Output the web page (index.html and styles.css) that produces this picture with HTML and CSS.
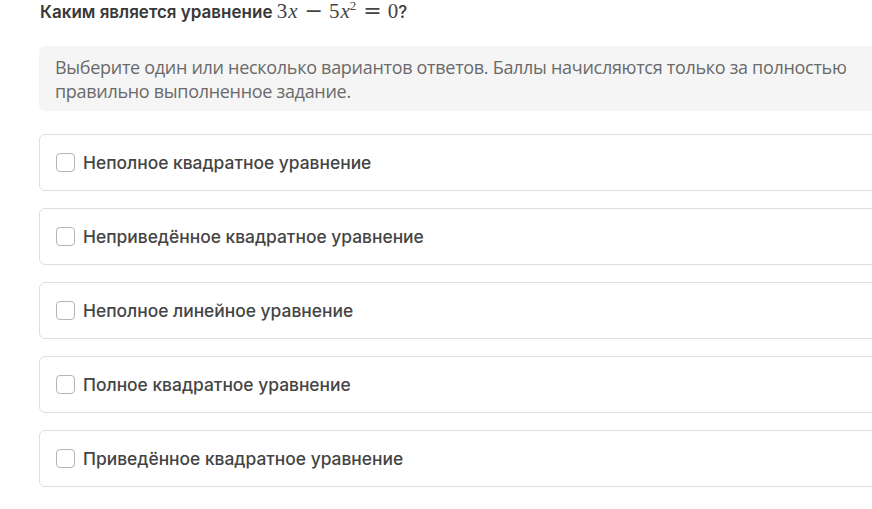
FILE: index.html
```html
<!DOCTYPE html>
<html lang="ru">
<head>
    <meta charset="UTF-8">
    <meta name="viewport" content="width=device-width, initial-scale=1.0">
    <title>Вопрос</title>
    <link rel="stylesheet" href="styles.css">
</head>
<body>

<div class="question">
    <p class="question-title">
        Каким является уравнение
        <span class="math">3<i>x</i><span class="op">−</span>5<i>x</i><sup>2</sup><span class="op">=</span>0</span><span class="qmark">?</span>
    </p>

    <div class="hint">
        Выберите один или несколько вариантов ответов. Баллы начисляются только за полностью
        правильно выполненное задание.
    </div>

    <div class="answers">
        <label class="answer">
            <span class="checkbox"></span>
            <span class="answer-text">Неполное квадратное уравнение</span>
        </label>
        <label class="answer">
            <span class="checkbox"></span>
            <span class="answer-text">Неприведённое квадратное уравнение</span>
        </label>
        <label class="answer">
            <span class="checkbox"></span>
            <span class="answer-text">Неполное линейное уравнение</span>
        </label>
        <label class="answer">
            <span class="checkbox"></span>
            <span class="answer-text">Полное квадратное уравнение</span>
        </label>
        <label class="answer">
            <span class="checkbox"></span>
            <span class="answer-text">Приведённое квадратное уравнение</span>
        </label>
    </div>
</div>

</body>
</html>
```

FILE: styles.css
```css
html, body {
    margin: 0;
    background-color: #fff;
    overflow: hidden;
}
body {
    font-family: Inter, "Open Sans", sans-serif;
    color: #444;
}
.question {
    width: 860px;
    margin-left: 39px;
}
.question-title {
    margin: -1px 0 0 1px;
    font-size: 17px;
    line-height: 24px;
    font-weight: 600;
    color: #383838;
}
.math {
    font-family: "Liberation Serif", serif;
    font-size: 21px;
    font-weight: 400;
    color: #444;
}
.math i {
    font-style: italic;
    margin-left: 1px;
}
.math .op {
    display: inline-block;
    margin: 0 6px 0 7px;
    font-family: "DejaVu Sans", sans-serif;
    font-size: 22px;
    line-height: 1;
}
.math sup {
    font-size: 13px;
    line-height: 0;
}
.qmark {
    font-weight: 500;
}
.hint {
    margin-top: 22px;
    padding: 9px 16px 8px;
    background-color: #f5f5f5;
    border-radius: 6px;
    font-family: "Open Sans", sans-serif;
    font-size: 18px;
    line-height: 24px;
    color: #6a6a6a;
    letter-spacing: -0.3px;
}
.answers {
    display: flex;
    flex-direction: column;
    gap: 17px;
    margin-top: 23px;
}
.answer {
    display: flex;
    align-items: center;
    gap: 8px;
    height: 55px;
    padding: 0 16px;
    border: 1px solid #dedede;
    border-radius: 6px;
    cursor: pointer;
}
.checkbox {
    width: 17px;
    height: 17px;
    border: 1.5px solid #b5b5b5;
    border-radius: 4px;
    flex-shrink: 0;
}
.answer-text {
    font-size: 17.4px;
    font-weight: 500;
    color: #444;
}
```
